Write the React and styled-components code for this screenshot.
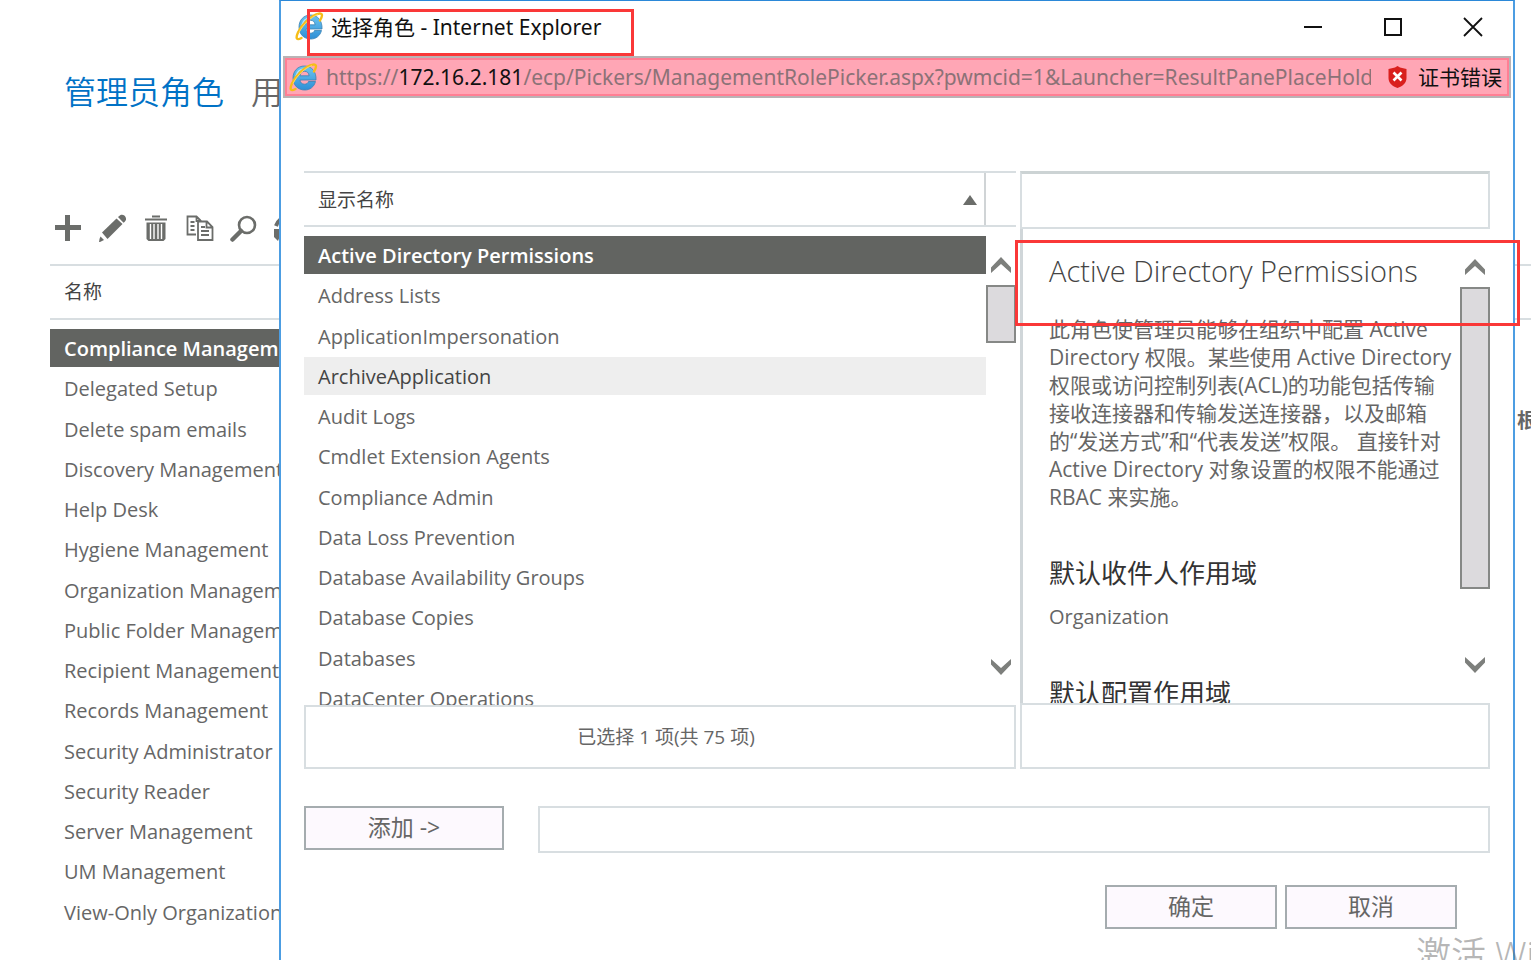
import React, { useState } from "react";
import styled, { createGlobalStyle } from "styled-components";

const GlobalStyle = createGlobalStyle`
  * {
    box-sizing: border-box;
  }
  body {
    margin: 0;
    background: #fff;
    color: #666;
    font-family: "Open Sans", "Noto Sans CJK SC", sans-serif;
    font-size: 20px;
    line-height: 28px;
  }
  button, input {
    font: inherit;
    color: inherit;
  }
`;

const Page = styled.div`
  position: relative;
  height: 100vh;
  overflow: hidden;
`;

/* ---------- admin center behind the dialog ---------- */

const Admin = styled.main`
  padding: 68px 0 0 49px;
`;

const Tabs = styled.nav`
  display: flex;
  gap: 27px;
  padding-left: 15px;
`;

const Tab = styled.a`
  color: ${(p) => (p.$active ? "#0072c6" : "#666")};
  font-size: 32px;
  font-weight: 350;
  line-height: 48px;
  text-decoration: none;
  white-space: nowrap;
`;

const Toolbar = styled.div`
  display: flex;
  gap: 16px;
  height: 56px;
  margin-top: 92px;
  padding: 6px 5px;
`;

const ToolButton = styled.button`
  width: 28px;
  height: 28px;
  padding: 0;
  border: 0;
  background: none;
  color: #6b6d6a;

  svg {
    display: block;
  }
`;

const ColumnHeader = styled.div`
  display: flex;
  height: 56px;
  border-top: 2px solid #d8dee1;
  border-bottom: 2px solid #d8dee1;
  color: #444;
  font-size: 19px;
`;

const ColumnTitle = styled.span`
  padding: 12px 14px;
`;

const AdminTable = styled.div`
  margin-left: 1px;
`;

const AdminBody = styled.div`
  display: grid;
  grid-template-columns: minmax(0, 1fr) 14px;
  gap: 8px;
  padding-top: 9px;
`;

const AdminNote = styled.p`
  margin: 78px 0 0;
  overflow: hidden;
  font-weight: 600;
  white-space: nowrap;
`;

const List = styled.ul`
  display: grid;
  grid-auto-rows: 1fr;
  gap: 2px;
  flex: 1;
  min-width: 0;
  min-height: ${(p) => p.$height}px;
  margin: 0;
  padding: 0;
  list-style: none;
`;

const Item = styled.li`
  padding: 6px 14px 4px;
  background: ${(p) => (p.$selected ? "#626461" : p.$hover ? "#eee" : "none")};
  color: ${(p) => (p.$selected ? "#fff" : p.$hover ? "#444" : "#666")};
  font-weight: ${(p) => (p.$selected ? 600 : 400)};
  white-space: nowrap;
  cursor: pointer;
`;

/* ---------- dialog window ---------- */

const Window = styled.section`
  position: absolute;
  inset: 0 16px 0 279px;
  border: 2px solid #4c9de2;
  border-top: 1px solid #2b88d8;
  border-bottom: 0;
  background: #fff;
`;

const TitleBar = styled.header`
  position: relative;
  display: flex;
  align-items: center;
  height: 55px;
  padding: 0 30px 4px 14px;
  color: #111;
`;

const WindowTitle = styled.h1`
  flex: 1;
  margin: 0 0 0 7px;
  font-family: "Noto Sans", "Noto Sans CJK SC", sans-serif;
  font-size: 21px;
  font-weight: 400;
`;

const WindowButtons = styled.div`
  display: flex;
  gap: 60px;
`;

const WindowButton = styled.button`
  width: 20px;
  height: 20px;
  padding: 0;
  border: 0;
  background: none;

  svg {
    display: block;
  }
`;

const AddressBar = styled.div`
  display: flex;
  align-items: center;
  height: 42px;
  margin: 0 2px;
  padding: 0 7px 0 4px;
  border: 2px solid #b9b3b5;
  outline: 2px solid #ff7f94;
  outline-offset: -4px;
  background: #ffa6b5;
  color: #111;
  font-family: "Noto Sans", "Noto Sans CJK SC", sans-serif;
  font-size: 21px;
`;

const Address = styled.span`
  flex: 1;
  min-width: 0;
  margin: 0 17px 0 8px;
  overflow: hidden;
  color: #8c7277;
  white-space: nowrap;

  b {
    color: #111;
    font-weight: 400;
  }
`;

const CertError = styled.span`
  display: flex;
  align-items: center;
  gap: 11px;
`;

const Content = styled.div`
  padding: 73px 23px 0;
`;

const Panes = styled.div`
  display: grid;
  grid-template-columns: minmax(0, 712fr) minmax(0, 470fr);
  gap: 4px;
  height: 598px;
`;

const Pane = styled.div`
  position: relative;
  display: flex;
  flex-direction: column;
  min-height: 0;
`;

const SortHeader = styled.button`
  display: flex;
  align-items: center;
  justify-content: space-between;
  flex: 1;
  margin-right: 30px;
  padding: 1px 7px 0 14px;
  border: 0;
  border-right: 2px solid #d0d4d6;
  background: none;
`;

const PickerBody = styled.div`
  display: flex;
  flex: 1;
  min-height: 0;
  padding-top: 9px;
  overflow: hidden;
`;

const DetailToolbar = styled.div`
  height: 58px;
  border: 2px solid #d8dee1;
  border-top: 3px solid #ccd3d4;
`;

const DetailBody = styled.div`
  display: flex;
  flex: 1;
  min-height: 0;
  overflow: hidden;
  border-left: 3px solid #d0d6d9;
`;

const Detail = styled.article`
  flex: 1;
  min-width: 0;
  padding: 22px 0 0 26px;
  white-space: nowrap;
`;

const DetailTitle = styled.h2`
  margin: 0;
  color: #444;
  font-size: 29px;
  font-weight: 300;
  line-height: 40px;
`;

const DetailHeading = styled.h3`
  margin: 44px 0 12px;
  color: #333;
  font-size: 26px;
  font-weight: 400;
  line-height: 36px;
`;

const DetailText = styled.p`
  margin: ${(p) => (p.$first ? 24 : 0)}px 0 0;
  font-size: ${(p) => (p.$first ? 21 : 20)}px;
`;

const Scroll = styled.div`
  display: flex;
  flex-direction: column;
  width: 30px;
  padding: ${(p) => (p.$inset ? "20px 0 29px" : "29px 0 29px")};
`;

const ScrollButton = styled.button`
  width: 30px;
  height: 18px;
  padding: 0 3px;
  border: 0;
  background: none;
  color: #7d7f7c;

  svg {
    display: block;
  }
`;

const Track = styled.div`
  flex: 1;
  padding-top: 11px;
`;

const Thumb = styled.div`
  height: ${(p) => p.$size};
  border: 2px solid #868886;
  background: #dcdadd;
`;

const PaneFooter = styled.div`
  display: flex;
  align-items: center;
  justify-content: center;
  height: ${(p) => p.$height}px;
  padding-left: 12px;
  border: 2px solid #d8dee1;
  font-size: 19px;
`;

const AddRow = styled.div`
  display: flex;
  align-items: flex-start;
  gap: 34px;
  margin-top: 37px;
`;

const Button = styled.button`
  width: ${(p) => (p.$wide ? 200 : 172)}px;
  height: 44px;
  padding: 0 0 2px;
  border: 2px solid #a5acaf;
  background: #fdf9fe;
  font-size: 23px;
`;

const AddInput = styled.input`
  flex: 1;
  min-width: 0;
  height: 47px;
  padding: 0 10px;
  border: 2px solid #d8dee1;
  background: #fff;
`;

const Actions = styled.div`
  display: flex;
  justify-content: flex-end;
  gap: 8px;
  margin-top: 32px;
  padding-right: 33px;
`;

/* red boxes drawn on top of the window */
const TitleMark = styled.div`
  position: absolute;
  top: 8px;
  left: 26px;
  width: 327px;
  height: 47px;
  border: 3px solid #fa3838;
  pointer-events: none;
`;

const DetailMark = styled.div`
  position: absolute;
  top: 69px;
  left: -5px;
  right: -30px;
  height: 86px;
  border: 3px solid #fa3838;
  pointer-events: none;
`;

const Watermark = styled.div`
  position: absolute;
  top: 930px;
  left: calc(100% - 115px);
  color: rgba(110, 110, 110, 0.5);
  font-family: "Noto Sans", "Noto Sans CJK SC", sans-serif;
  font-size: 35px;
  font-weight: 350;
  line-height: 48px;
  white-space: nowrap;
  pointer-events: none;
`;

const PlusIcon = () => (
  <svg width="28" height="28" viewBox="0 0 28 28">
    <path d="M11 1h5v10h11v5H16v11h-5V16H1v-5h10z" fill="currentColor" />
  </svg>
);

const PencilIcon = () => (
  <svg width="28" height="28" viewBox="0 0 28 28" fill="currentColor">
    <path d="M4 18.500 18.500 4.500l6 5.500L9.500 25z" />
    <path d="M20 3 22.500 1c2-.8 4 0 5 2s.5 3.500-1 5L25.500 8.800z" />
    <path d="M1.500 25 2.500 22.500l3.500 3.500-5 2.500z" />
  </svg>
);

const TrashIcon = () => (
  <svg width="28" height="28" viewBox="0 0 28 28">
    <path d="M3 5.500h22M10 2.500h8" stroke="currentColor" strokeWidth="1.800" />
    <path d="M4.500 8.500h19V25l-2 2h-15l-2-2z" fill="currentColor" />
    <path d="M8.500 10v15M12 10v15M16 10v15M19.500 10v15" stroke="#fff" strokeWidth="1.400" />
  </svg>
);

const CopyIcon = () => (
  <svg width="28" height="28" viewBox="0 0 28 28" fill="none" stroke="currentColor" strokeWidth="1.800">
    <path d="M10 20.500H1.500V2.500h9l4 4M10.500 3v4h5" />
    <path d="M4.500 8h4M4.500 12h4M4.500 16h4" />
    <path d="M12 7.500h9l5.500 5.500v13H12zM20.500 8v5.500h6" />
    <path d="M15 13h4M15 17h8M15 21h8" />
  </svg>
);

const SearchIcon = () => (
  <svg width="28" height="28" viewBox="0 0 28 28" fill="none" stroke="currentColor">
    <circle cx="17" cy="11" r="8" strokeWidth="2.600" />
    <path d="M11 17 2.500 25.500" strokeWidth="4.500" strokeLinecap="round" />
  </svg>
);

const RefreshIcon = () => (
  <svg width="28" height="28" viewBox="0 0 28 28" fill="none" stroke="currentColor" strokeWidth="4">
    <path d="M2 12C4 6 9 4 13 4s8 2 10 6M26 16c-2 6-7 8-11 8s-8-2-10-5" />
    <path d="M0 15h9l-3 4v3l-2 5-4-4zM28 12h-9l8-7z" fill="currentColor" stroke="none" />
  </svg>
);

const IeIcon = () => (
  <svg width="29" height="29" viewBox="0 0 29 29" fill="none">
    <defs>
      <linearGradient id="ieBlue" x1="0" y1="0" x2="0" y2="1">
        <stop offset="0" stopColor="#6cc5f0" />
        <stop offset="1" stopColor="#2e8fd6" />
      </linearGradient>
    </defs>
    <path
      d="M15.500 3C8.800 3 4 8 4 15s4.800 12 11.800 12c5.200 0 9.200-3 10.700-8.500h-7c-.7 1.800-1.800 2.700-3.800 2.700-2.900 0-4.500-1.600-4.700-4.200H27C27.500 8.500 22.500 3 15.500 3zM11 12.800c.4-2.900 2-4.500 4.600-4.500s4.200 1.600 4.500 4.500z"
      fill="url(#ieBlue)"
      fillRule="evenodd"
      stroke="#3a82b4"
      strokeWidth=".8"
    />
    <path d="M7 13c1-4.500 4.500-7 9-7" stroke="#b4e6fa" strokeWidth="1.400" strokeLinecap="round" />
    <path
      d="M25 8.500C28 3.500 27.500 1 24 1.600 16.500 3 7 12 3 20.500c-2.600 5.600-1.500 8.300 3.500 5.500"
      stroke="#f6bd16"
      strokeWidth="2.400"
      strokeLinecap="round"
    />
    <path d="M23 2.600C16.500 4.500 8 12.500 4 20.500" stroke="#fde27a" strokeWidth=".8" />
  </svg>
);

const ShieldIcon = () => (
  <svg width="19" height="22" viewBox="0 0 19 22">
    <path d="M9.500 0 12 1.500 18.500 3v9c0 5-4 8.500-9 10-5-1.500-9-5-9-10V3L7 1.500z" fill="#d9201e" />
    <path d="m5.500 6.500 8 8m0-8-8 8" stroke="#fff" strokeWidth="2.600" />
  </svg>
);

const Chevron = ({ down }) => (
  <svg width="24" height="18" viewBox="0 0 24 18">
    <path
      d={down ? "M2 1v5.500L12 17 22 6.500V1L12 10z" : "M2 17v-5.500L12 1l10 10.500V17L12 8z"}
      fill="currentColor"
    />
  </svg>
);

const tools = [
  { label: "新建", icon: <PlusIcon /> },
  { label: "编辑", icon: <PencilIcon /> },
  { label: "删除", icon: <TrashIcon /> },
  { label: "复制", icon: <CopyIcon /> },
  { label: "搜索", icon: <SearchIcon /> },
  { label: "刷新", icon: <RefreshIcon /> },
];

const groups = [
  "Compliance Management",
  "Delegated Setup",
  "Delete spam emails",
  "Discovery Management",
  "Help Desk",
  "Hygiene Management",
  "Organization Management",
  "Public Folder Management",
  "Recipient Management",
  "Records Management",
  "Security Administrator",
  "Security Reader",
  "Server Management",
  "UM Management",
  "View-Only Organization Management",
];

const roles = [
  "Active Directory Permissions",
  "Address Lists",
  "ApplicationImpersonation",
  "ArchiveApplication",
  "Audit Logs",
  "Cmdlet Extension Agents",
  "Compliance Admin",
  "Data Loss Prevention",
  "Database Availability Groups",
  "Database Copies",
  "Databases",
  "DataCenter Operations",
];

const ScrollBar = ({ size, inset }) => (
  <Scroll $inset={inset}>
    <ScrollButton aria-label="向上滚动">
      <Chevron />
    </ScrollButton>
    <Track>
      <Thumb $size={size} />
    </Track>
    <ScrollButton aria-label="向下滚动">
      <Chevron down />
    </ScrollButton>
  </Scroll>
);

const AdminCenter = () => (
  <Admin>
    <Tabs>
      <Tab href="#admin" $active>
        管理员角色
      </Tab>
      <Tab href="#user">用户角色</Tab>
    </Tabs>
    <Toolbar>
      {tools.map((tool) => (
        <ToolButton key={tool.label} aria-label={tool.label}>
          {tool.icon}
        </ToolButton>
      ))}
    </Toolbar>
    <AdminTable>
      <ColumnHeader>
        <ColumnTitle>名称</ColumnTitle>
      </ColumnHeader>
      <AdminBody>
        <List $height={602}>
          {groups.map((name, i) => (
            <Item key={name} $selected={i === 0}>
              {name}
            </Item>
          ))}
        </List>
        <AdminNote>根据</AdminNote>
      </AdminBody>
    </AdminTable>
  </Admin>
);

const RolePicker = () => {
  const [selected, setSelected] = useState("Active Directory Permissions");
  const [hovered, setHovered] = useState("ArchiveApplication");
  const [added, setAdded] = useState("");

  return (
    <Window>
      <TitleBar>
        <IeIcon />
        <WindowTitle>选择角色 - Internet Explorer</WindowTitle>
        <WindowButtons>
          <WindowButton aria-label="最小化">
            <svg width="20" height="20" viewBox="0 0 20 20">
              <path d="M1 10h18" stroke="#111" strokeWidth="2" />
            </svg>
          </WindowButton>
          <WindowButton aria-label="最大化">
            <svg width="20" height="20" viewBox="0 0 20 20">
              <path d="M2 2h16v16H2z" fill="none" stroke="#111" strokeWidth="2" />
            </svg>
          </WindowButton>
          <WindowButton aria-label="关闭">
            <svg width="20" height="20" viewBox="0 0 20 20">
              <path d="m1 1 18 18m0-18L1 19" stroke="#111" strokeWidth="1.800" />
            </svg>
          </WindowButton>
        </WindowButtons>
        <TitleMark />
      </TitleBar>

      <AddressBar>
        <IeIcon />
        <Address>
          https://<b>172.16.2.181</b>
          /ecp/Pickers/ManagementRolePicker.aspx?pwmcid=1&amp;Launcher=ResultPanePlaceHolder
        </Address>
        <CertError>
          <ShieldIcon />
          证书错误
        </CertError>
      </AddressBar>

      <Content>
        <Panes>
          <Pane>
            <ColumnHeader>
              <SortHeader>
                显示名称
                <svg width="14" height="10" viewBox="0 0 14 10">
                  <path d="M7 0l7 10H0z" fill="#6b6d6a" />
                </svg>
              </SortHeader>
            </ColumnHeader>
            <PickerBody>
              <List $height={481}>
                {roles.map((name) => (
                  <Item
                    key={name}
                    $selected={name === selected}
                    $hover={name === hovered}
                    onClick={() => setSelected(name)}
                    onMouseEnter={() => setHovered(name)}
                  >
                    {name}
                  </Item>
                ))}
              </List>
              <ScrollBar size="58px" inset />
            </PickerBody>
            <PaneFooter $height={64}>已选择 1 项(共 75 项)</PaneFooter>
          </Pane>

          <Pane>
            <DetailToolbar />
            <DetailBody>
              <Detail>
                <DetailTitle>Active Directory Permissions</DetailTitle>
                <DetailText $first>
                  此角色使管理员能够在组织中配置 Active
                  <br />
                  Directory 权限。某些使用 Active Directory
                  <br />
                  权限或访问控制列表(ACL)的功能包括传输
                  <br />
                  接收连接器和传输发送连接器，以及邮箱
                  <br />
                  的“发送方式”和“代表发送”权限。 直接针对
                  <br />
                  Active Directory 对象设置的权限不能通过
                  <br />
                  RBAC 来实施。
                </DetailText>
                <DetailHeading>默认收件人作用域</DetailHeading>
                <DetailText>Organization</DetailText>
                <DetailHeading>默认配置作用域</DetailHeading>
              </Detail>
              <ScrollBar size="302px" />
            </DetailBody>
            <PaneFooter $height={66} />
            <DetailMark />
          </Pane>
        </Panes>

        <AddRow>
          <Button $wide onClick={() => setAdded(selected)}>
            添加 -&gt;
          </Button>
          <AddInput aria-label="已添加的角色" value={added} onChange={(e) => setAdded(e.target.value)} />
        </AddRow>
        <Actions>
          <Button>确定</Button>
          <Button>取消</Button>
        </Actions>
      </Content>
    </Window>
  );
};

const App = () => (
  <Page>
    <GlobalStyle />
    <AdminCenter />
    <RolePicker />
    <Watermark>激活 Windows</Watermark>
  </Page>
);

export default App;
